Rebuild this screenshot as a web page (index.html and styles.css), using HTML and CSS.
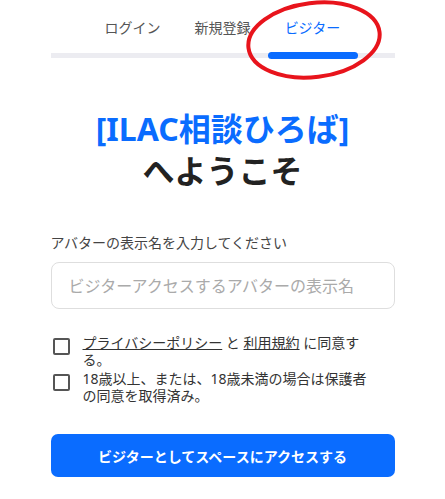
FILE: index.html
```html
<!DOCTYPE html>
<html lang="ja">
<head>
<meta charset="utf-8">
<title>ILAC相談ひろば</title>
<link rel="stylesheet" href="styles.css">
</head>
<body>
<div class="page">
  <nav class="tabs">
    <a class="tab">ログイン</a>
    <a class="tab">新規登録</a>
    <a class="tab active">ビジター</a>
    <svg class="annotation" width="150" height="90" viewBox="0 0 150 90" aria-hidden="true">
      <ellipse cx="75" cy="42" rx="66" ry="37" fill="none" stroke="#e8141c" stroke-width="4" transform="rotate(-7 75 42)"/>
    </svg>
  </nav>
  <div class="tab-rule"></div>

  <h1 class="title"><span class="brand">[ILAC相談ひろば]</span><span class="welcome">へようこそ</span></h1>

  <form class="form">
    <label class="field-label" for="name">アバターの表示名を入力してください</label>
    <input class="field-input" id="name" type="text" placeholder="ビジターアクセスするアバターの表示名">

    <div class="checks">
      <label class="check">
        <input type="checkbox" class="box">
        <span class="check-text"><a class="link">プライバシーポリシー</a> と <a class="link">利用規約</a> に同意する。</span>
      </label>
      <label class="check">
        <input type="checkbox" class="box">
        <span class="check-text">18歳以上、または、18歳未満の場合は保護者の同意を取得済み。</span>
      </label>
    </div>

    <button type="button" class="submit">ビジターとしてスペースにアクセスする</button>
  </form>
</div>
</body>
</html>
```
FILE: styles.css
```css
* { box-sizing: border-box; }
html, body { margin: 0; padding: 0; background: #fff; }
body {
  font-family: "Noto Sans", "Noto Sans CJK JP", sans-serif;
  color: #333;
}
.page {
  width: 344px;
  margin: 0 auto;
  position: relative;
}
.tabs {
  position: relative;
  display: flex;
  justify-content: center;
  height: 53px;
}
.tab {
  position: relative;
  width: 90px;
  text-align: center;
  font-size: 14px;
  line-height: 20px;
  padding-top: 18px;
  color: #555;
}
.tab.active { color: #0a6cff; }
.tab.active::after {
  content: "";
  position: absolute;
  left: 0;
  right: 0;
  bottom: -6px;
  height: 7px;
  border-radius: 4px;
  background: #0a6cff;
  z-index: 1;
}
.tab-rule {
  height: 5px;
  background: #ececf1;
}
.annotation {
  position: absolute;
  left: 188px;
  top: -2px;
  pointer-events: none;
  z-index: 2;
}
.title {
  margin: 50px 0 0;
  text-align: center;
  font-size: 32px;
  line-height: 42px;
  font-weight: 700;
}
.brand { display: block; color: #0a6cff; }
.welcome { display: block; color: #222; }
.form {
  display: flex;
  flex-direction: column;
  margin-top: 41px;
}
.field-label {
  font-size: 14px;
  line-height: 20px;
  color: #444;
}
.field-input {
  margin-top: 9px;
  height: 47px;
  border: 1px solid #dedede;
  border-radius: 8px;
  padding: 0 17px;
  font-family: inherit;
  font-size: 16px;
  color: #333;
}
.field-input::placeholder { color: #aaa; }
.checks {
  margin-top: 25px;
  display: flex;
  flex-direction: column;
  gap: 2px;
  padding-right: 24px;
}
.check {
  display: flex;
  align-items: flex-start;
  gap: 13px;
  font-size: 14px;
  line-height: 17px;
  color: #333;
}
.box {
  appearance: none;
  -webkit-appearance: none;
  flex: none;
  width: 17px;
  height: 17px;
  margin: 4px 0 0 2px;
  border: 2px solid #555;
  border-radius: 2px;
  background: #fff;
}
.check-text { flex: 1; }
.link { color: #333; text-decoration: underline; }
.submit {
  margin-top: 30px;
  height: 43px;
  border: 0;
  border-radius: 7px;
  background: #0a6cff;
  color: #fff;
  font-family: inherit;
  font-size: 14px;
  font-weight: 700;
}
```
